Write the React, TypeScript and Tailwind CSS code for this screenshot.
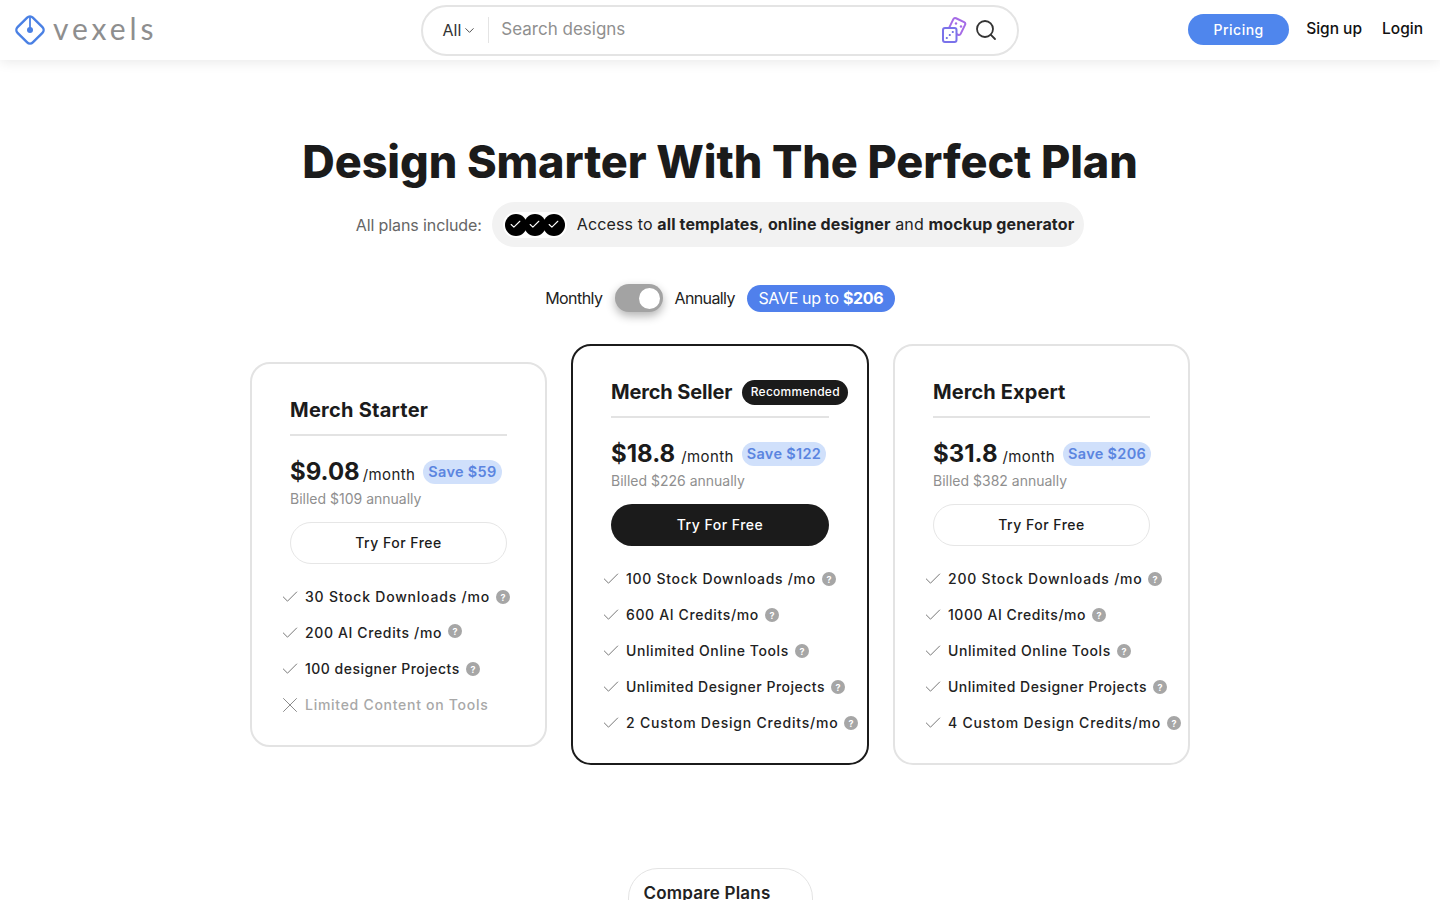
import { Check, ChevronDown, Search, X } from "lucide-react";

const POPPINS = "font-['Inter','Liberation_Sans',sans-serif]";

type Feature = { label: string; off?: boolean; raised?: boolean; track?: string; width: string };

type Plan = {
  name: string;
  nameClass: string;
  price: string;
  priceGap: string;
  save: string;
  billed: string;
  width: string;
  recommended?: boolean;
  features: Feature[];
};

const plans: Plan[] = [
  {
    name: "Merch Starter",
    nameClass: "tracking-[0.25px]",
    price: "$9.08",
    priceGap: "ml-[3px]",
    save: "Save $59",
    billed: "Billed $109 annually",
    width: "w-[297px]",
    features: [
      { label: "30 Stock Downloads /mo", width: "w-[185px]", track: "tracking-[0.78px]" },
      { label: "200 AI Credits /mo", width: "w-[137px]", raised: true, track: "tracking-[0.63px]" },
      { label: "100 designer Projects", width: "w-[155px]", track: "tracking-[0.48px]" },
      { label: "Limited Content on Tools", width: "w-[183px]", off: true, track: "tracking-[0.72px]" },
    ],
  },
  {
    name: "Merch Seller",
    nameClass: "tracking-[-0.15px]",
    price: "$18.8",
    priceGap: "ml-[6px]",
    save: "Save $122",
    billed: "Billed $226 annually",
    width: "w-[298px]",
    recommended: true,
    features: [
      { label: "100 Stock Downloads /mo", width: "w-[190px]", track: "tracking-[0.7px]" },
      { label: "600 AI Credits/mo", width: "w-[133px]", track: "tracking-[0.63px]" },
      { label: "Unlimited Online Tools", width: "w-[163px]", track: "tracking-[0.6px]" },
      { label: "Unlimited Designer Projects", width: "w-[199px]", track: "tracking-[0.5px]" },
      { label: "2 Custom Design Credits/mo", width: "w-[212px]", track: "tracking-[0.78px]" },
    ],
  },
  {
    name: "Merch Expert",
    nameClass: "tracking-[0.1px]",
    price: "$31.8",
    priceGap: "ml-[5px]",
    save: "Save $206",
    billed: "Billed $382 annually",
    width: "w-[297px]",
    features: [
      { label: "200 Stock Downloads /mo", width: "w-[194px]", track: "tracking-[0.78px]" },
      { label: "1000 AI Credits/mo", width: "w-[138px]", track: "tracking-[0.55px]" },
      { label: "Unlimited Online Tools", width: "w-[163px]", track: "tracking-[0.6px]" },
      { label: "Unlimited Designer Projects", width: "w-[199px]", track: "tracking-[0.5px]" },
      { label: "4 Custom Design Credits/mo", width: "w-[213px]", track: "tracking-[0.78px]" },
    ],
  },
];

function Logo() {
  return (
    <svg width="32" height="32" viewBox="0 0 32 32" fill="none" stroke="#4a80e4" strokeWidth="2.4">
      <rect x="5.2" y="5.2" width="21.6" height="21.6" rx="4" transform="rotate(45 16 16)" />
      <path d="M16 2v13" strokeWidth="1.8" />
      <circle cx="16" cy="16" r="3" fill="#4a80e4" stroke="none" />
    </svg>
  );
}

function Dice() {
  return (
    <svg width="26" height="28" viewBox="0 0 26 28" fill="none" strokeWidth="2">
      <rect x="9.5" y="3.5" width="13" height="14" rx="2" transform="rotate(26 16 10.5)" stroke="#a56be6" fill="#fff" />
      <circle cx="15" cy="7.5" r="1.2" fill="#a56be6" />
      <circle cx="20" cy="10.5" r="1.2" fill="#a56be6" />
      <rect x="2" y="12" width="13.5" height="14" rx="2" stroke="#7a72ea" fill="#fff" />
      <circle cx="5.8" cy="22" r="1.1" fill="#6a68e0" />
      <circle cx="8.8" cy="19" r="1.1" fill="#6a68e0" />
      <circle cx="11.8" cy="16" r="1.1" fill="#6a68e0" />
    </svg>
  );
}

function Help({ raised }: { raised?: boolean }) {
  return (
    <span
      className={`flex h-[14px] w-[14px] shrink-0 items-center justify-center rounded-full bg-[#a6a6a6] text-[9px] font-bold leading-none text-white ${raised ? "-translate-y-[1px]" : "translate-y-[1px]"}`}
    >
      ?
    </span>
  );
}

function PlanCard({ plan }: { plan: Plan }) {
  return (
    <div
      className={`${plan.width} rounded-[20px] border-2 bg-white pl-[38px] pr-[38px] pt-[32px] pb-[28px] ${plan.recommended ? "border-[#1b1b1b]" : "border-[#e3e3e3]"}`}
    >
      <div className="flex h-[40px] items-start gap-[10px] border-b-2 border-[#e3e3e3] whitespace-nowrap">
        <h2 className={`text-[20px] font-bold leading-[28px] text-[#1b1b1b] ${plan.nameClass}`}>{plan.name}</h2>
        {plan.recommended && (
          <span className="mt-[2px] flex h-[25px] w-[106px] shrink-0 items-center justify-center rounded-full bg-[#1b1b1b] pb-[2px] text-[12px] font-medium tracking-[0.25px] text-white">
            Recommended
          </span>
        )}
      </div>
      <div className="mt-[23px] flex h-[26px] items-center whitespace-nowrap">
        <span className="text-[24px] font-bold leading-none text-[#1b1b1b]">{plan.price}</span>
        <span className={`${plan.priceGap} mt-[4px] text-[15px] leading-none tracking-[0.4px] text-[#222]`}>/month</span>
        <span className="ml-[8px] rounded-full bg-[#d0e0fb] px-[5px] py-[3px] text-[14.5px] font-semibold leading-[18px] tracking-[0.3px] text-[#5b85e0]">
          {plan.save}
        </span>
      </div>
      <p className="mt-[4px] text-[14px] leading-[20px] text-[#8f8f8f]">{plan.billed}</p>
      <button
        className={`${POPPINS} mt-[13px] flex h-[42px] w-full items-center justify-center rounded-full pb-[2px] text-[14px] font-medium tracking-[0.5px] ${plan.recommended ? "bg-[#1b1b1b] text-white" : "border border-[#e6e6e6] bg-white text-[#1b1b1b]"}`}
      >
        Try For Free
      </button>
      <ul className={`${POPPINS} -ml-[8px] mt-[19px] flex w-max flex-col gap-[10px]`}>
        {plan.features.map((f) => (
          <li key={f.label} className="flex h-[26px] items-center whitespace-nowrap">
            <span className="flex h-[16px] w-[16px] shrink-0 translate-y-[1px] items-center justify-center">
              {f.off ? (
                <X size={26} strokeWidth={0.9} className="shrink-0 text-[#888]" />
              ) : (
                <Check size={20} strokeWidth={1.2} className="shrink-0 text-[#777]" />
              )}
            </span>
            <span
              className={`ml-[7px] ${f.width} text-[14px] font-medium ${f.track} ${f.off ? "text-[#a8a8a8]" : "text-[#222]"}`}
            >
              {f.label}
            </span>
            {!f.off && (
              <span className="ml-[6px]">
                <Help raised={f.raised} />
              </span>
            )}
          </li>
        ))}
      </ul>
    </div>
  );
}

export default function App() {
  return (
    <div className="h-screen overflow-hidden bg-white font-['Inter','Liberation_Sans',sans-serif] text-[#1b1b1b]">
      <header className="grid h-[60px] grid-cols-[1fr_598px_1fr] items-center bg-white pl-[14px] pr-[17px] shadow-[0_2px_12px_rgba(0,0,0,0.09)]">
        <div className="flex items-center gap-[7px]">
          <Logo />
          <span className="mb-[5px] font-['Lato',sans-serif] text-[30px] leading-none tracking-[3.9px] text-[#8e8e8e]">vexels</span>
        </div>
        <div className="ml-[1px] flex h-[51px] w-[598px] items-center rounded-full border-2 border-[#e4e4e4] pl-[20px] pr-[19px]">
          <span className="text-[16px] text-[#333]">All</span>
          <ChevronDown size={15} strokeWidth={1.5} className="ml-[1px] text-[#444]" />
          <span className="ml-[11px] h-[26px] w-px bg-[#e4e4e4]" />
          <span className="ml-[12px] flex-1 text-[17px] text-[#8f8f8f]">Search designs</span>
          <Dice />
          <Search size={24} strokeWidth={1.8} className="ml-[7px] text-[#333]" />
        </div>
        <nav className="mb-[2px] flex items-center justify-end text-[15.5px] font-medium text-[#111]">
          <span className="flex h-[31px] w-[101px] items-center justify-center rounded-full bg-[#4f86ed] text-[14px] tracking-[0.5px] text-white">
            Pricing
          </span>
          <span className="ml-[17px]">Sign up</span>
          <span className="ml-[20px]">Login</span>
        </nav>
      </header>

      <main className="flex flex-col items-center">
        <h1 className="mt-[71px] text-[45px] font-extrabold leading-[62px] tracking-[-0.1px] text-[#1b1b1b]">
          Design Smarter With The Perfect Plan
        </h1>
        <div className="mt-[9px] flex items-center gap-[10px]">
          <span className="text-[16px] tracking-[-0.1px] text-[#666]">All plans include:</span>
          <div className="flex h-[45px] items-center rounded-full bg-[#f2f2f2] pl-[11px] pr-[10px]">
            <div className="flex rounded-full bg-white p-[2px]">
              {[0, 1, 2].map((i) => (
                <span
                  key={i}
                  className="-mr-[3px] flex h-[22px] w-[22px] items-center justify-center rounded-full bg-black text-white last:mr-0"
                >
                  <Check size={13} strokeWidth={2} />
                </span>
              ))}
            </div>
            <p className="ml-[10px] pb-[2px] text-[16px] tracking-[0.13px] text-[#222]">
              Access to <b>all templates</b>, <b>online designer</b> and <b>mockup generator</b>
            </p>
          </div>
        </div>

        <div className="mt-[37px] flex items-center text-[16px] text-[#222]">
          <span className="tracking-[-0.55px]">Monthly</span>
          <span className="ml-[13px] flex h-[28px] w-[48px] items-center justify-end rounded-full bg-[#a3a3a3] pr-[3px] shadow-[0_4px_10px_rgba(0,0,0,0.3)]">
            <span className="h-[21px] w-[21px] rounded-full bg-white" />
          </span>
          <span className="ml-[11px] tracking-[-0.6px]">Annually</span>
          <span className="ml-[12px] flex h-[27px] w-[148px] items-center justify-center rounded-full bg-[#5080ec] tracking-[-0.35px] text-white">
            SAVE up to&nbsp;<b>$206</b>
          </span>
        </div>

        <div className="mt-[32px] flex items-center gap-[24px]">
          {plans.map((p) => (
            <PlanCard key={p.name} plan={p} />
          ))}
        </div>

        <button className="mt-[103px] h-[60px] w-[185px] self-center rounded-t-[30px] border border-[#e4e4e4] pb-[8px] pl-[15px] text-left text-[17px] font-semibold tracking-[0.2px] text-[#222]">
          Compare Plans
        </button>
      </main>
    </div>
  );
}
